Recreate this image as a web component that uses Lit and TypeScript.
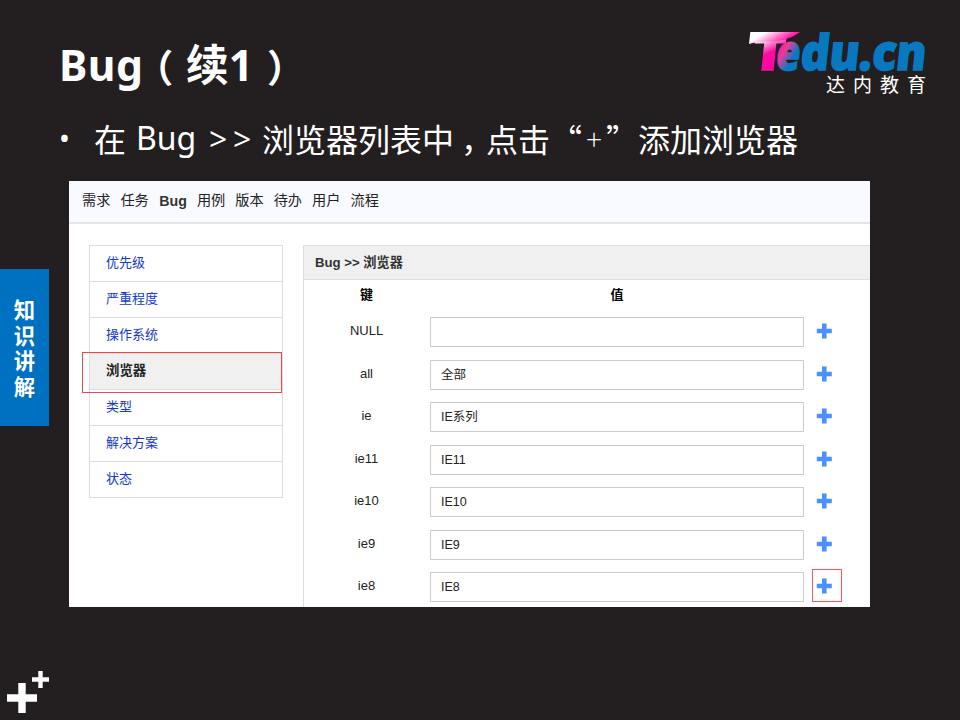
import { LitElement, html, css, svg } from "lit";
import { customElement } from "lit/decorators.js";
import { classMap } from "lit/directives/class-map.js";

const NAV = ["需求", "任务", "Bug", "用例", "版本", "待办", "用户", "流程"];
const MENU = ["优先级", "严重程度", "操作系统", "浏览器", "类型", "解决方案", "状态"];
const ROWS = [
  ["NULL", ""],
  ["all", "全部"],
  ["ie", "IE系列"],
  ["ie11", "IE11"],
  ["ie10", "IE10"],
  ["ie9", "IE9"],
  ["ie8", "IE8"],
];

@customElement("brand-logo")
class BrandLogo extends LitElement {
  static styles = css`
    :host { display: block; width: 190px; height: 92px; }
    svg { display: block; overflow: visible; }
    .word { font: 800 49px "Open Sans", "Noto Sans", sans-serif; stroke-width: 1.6px; }
    .sub { font: 400 19px "Noto Sans CJK SC", sans-serif; letter-spacing: 8px; }
  `;
  render() {
    return html`<svg width="190" height="92" viewBox="0 -20 190 92">
      ${svg`
      <defs>
        <linearGradient id="t" gradientUnits="userSpaceOnUse" x1="14" y1="4" x2="29" y2="29">
          <stop offset="0.1" stop-color="#fff"/><stop offset="0.72" stop-color="#ff0aa0"/><stop offset="1" stop-color="#ff0aa0"/>
        </linearGradient>
        <linearGradient id="t2" gradientUnits="userSpaceOnUse" x1="-10" y1="-38" x2="2" y2="-13">
          <stop offset="0.1" stop-color="#fff"/><stop offset="0.72" stop-color="#ff0aa0"/><stop offset="1" stop-color="#ff0aa0"/>
        </linearGradient>
        <linearGradient id="e" gradientUnits="userSpaceOnUse" x1="0" y1="-20" x2="20" y2="-10">
          <stop offset="0" stop-color="#ff1a98"/><stop offset="0.3" stop-color="#e83c9c"/><stop offset="0.8" stop-color="#0a78c2"/><stop offset="1" stop-color="#0a78c2"/>
        </linearGradient>
      </defs>
      <g transform="translate(30 41.500) skewX(-6)">
        <text class="word" x="-1" y="0" fill="url(#e)" stroke="url(#e)" textLength="24" lengthAdjust="spacingAndGlyphs">e</text>
        <text class="word" x="23.500" y="0" fill="#0878c0" stroke="#0878c0" textLength="125.500" lengthAdjust="spacingAndGlyphs">du.cn</text>
        <text class="word" x="-24.500" y="0" fill="url(#t2)" stroke="url(#t2)" textLength="32" lengthAdjust="spacingAndGlyphs">T</text>
      </g>
      <path d="M4.300 4H54C48 9 40 11.500 30.500 13.300C20 13.500 8 14 3 16Z" fill="url(#t)"/>
      <text class="sub" x="80" y="64" fill="#fff">达内教育</text>`}
    </svg>`;
  }
}

@customElement("app-root")
class AppRoot extends LitElement {
  static styles = css`
    :host {
      display: block; width: 960px; height: 720px; overflow: hidden; position: relative;
      background: #231f20; color: #fff;
      font-family: "Noto Sans", "Noto Sans CJK SC", sans-serif;
    }
    *, *::after { box-sizing: border-box; }
    .head { display: flex; justify-content: space-between; height: 108px; padding: 8px 24px 0 60px; }
    h1 { margin: 23px 0 0; font-size: 42.67px; line-height: 64px; font-weight: 700; white-space: nowrap; height: 64px; }
    .latin { letter-spacing: 0.4px; margin-left: -1px; }
    .cjk { font-family: "Noto Sans CJK SC", sans-serif; }
    .open, .close { font-size: 38px; line-height: 1; vertical-align: -1px; }
    .open { margin: 0 12.7px 0 -8px; }
    .close { margin-left: 14px; }
    .lead { display: flex; height: 58px; padding-left: 59px; font-size: 32px; line-height: 60px; white-space: pre; }
    .dot { width: 35px; font-size: 29px; }
    .bug { width: 83px; padding-left: 10px; line-height: 59px; }
    .gt { width: 53px; font-family: "Open Sans", sans-serif; letter-spacing: 5.7px; line-height: 61px; }
    .comma { position: relative; left: 7px; }
    .plus { width: 24px; text-align: center; font-size: 29px; font-weight: 300; font-family: "Open Sans", sans-serif; line-height: 62px; }
    .shot {
      margin: 15px 0 0 69px; width: 801px; height: 426px; background: #fff; color: #222;
      overflow: hidden; font: 13px "Liberation Sans", "Noto Sans CJK SC", sans-serif;
    }
    .nav {
      display: flex; gap: 10px; height: 43px; padding-left: 13px; line-height: 39px;
      font-size: 14.2px; background: #f9faff; border-bottom: 2px solid #e4e5e8;
    }
    .nav .on { font-weight: 700; color: #333; padding-left: 0.5px; line-height: 41px; }
    .body { display: flex; gap: 20px; padding: 21px 0 0 20px; }
    .menu { width: 194px; height: 253px; border: 1px solid #ddd; border-bottom: 0; }
    .item { height: 36px; border-bottom: 1px solid #ddd; padding-left: 16px; line-height: 34px; color: #1238cc; position: relative; }
    .item.on { background: #f0f0f0; color: #222; font-weight: 700; font-size: 13.4px; }
    .item.on::after { content: ""; position: absolute; left: -8px; top: -2px; width: 200px; height: 41px; border: 1px solid #f04848; z-index: 1; }
    .panel { width: 567px; height: 380px; border: 1px solid #ddd; border-right: 0; }
    .title { height: 34px; padding-left: 11px; line-height: 33px; font-size: 13.2px; background: #f0f0f0; border-bottom: 1px solid #ddd; font-weight: 700; color: #333; }
    .cols, .row { display: grid; grid-template-columns: 126px 374px 40px; }
    .cols { height: 37px; line-height: 29px; font-weight: 700; text-align: center; color: #000; }
    .row { height: 42.5px; align-items: start; line-height: 28px; }
    .key { text-align: center; padding-right: 1px; }
    .field { height: 30px; border: 1px solid #ccc; padding-left: 10px; font-size: 12.5px; line-height: 28px; }
    .add { position: relative; height: 30px; padding: 6px 0 0 12px; }
    .add svg { display: block; }
    .add.hot::after { content: ""; position: absolute; left: 8px; top: -3px; width: 30px; height: 33px; border: 1px solid #f55; }
    .tab {
      position: absolute; left: 0; top: 269px; width: 49px; height: 157px; background: #0070c0;
      display: flex; flex-direction: column; align-items: center; padding-top: 27px;
      font: 700 21.33px/25.5px "Noto Sans CJK SC", sans-serif;
    }
    .mark { position: absolute; left: 6px; top: 670px; }
  `;
  render() {
    return html`
      <div class="head">
        <h1><span class="latin">Bug</span><span class="cjk open">（</span><span class="cjk">续</span>1<span class="cjk close">）</span></h1>
        <brand-logo></brand-logo>
      </div>
      <div class="lead"><span class="dot">•</span><span class="cjk">在</span><span class="bug">Bug</span><span class="gt">&gt;&gt;</span><span class="cjk">浏览器列表中<span class="comma">，</span>点击“</span><span class="plus">+</span><span class="cjk">”添加浏览器</span></div>
      <div class="shot">
        <div class="nav">${NAV.map((n) => html`<span class=${classMap({ on: n === "Bug" })}>${n}</span>`)}</div>
        <div class="body">
          <div class="menu">${MENU.map((m) => html`<div class=${classMap({ item: true, on: m === "浏览器" })}>${m}</div>`)}</div>
          <div class="panel">
            <div class="title">Bug &gt;&gt; 浏览器</div>
            <div class="cols"><span class="key">键</span><span>值</span></div>
            ${ROWS.map(([k, v], i) => html`<div class="row">
              <span class="key">${k}</span>
              <div class="field">${v}</div>
              <div class=${classMap({ add: true, hot: i === ROWS.length - 1 })}>
                <svg width="16" height="16" viewBox="0 0 16 16"><path d="M6 .5h4.600v5.200h5.200v4.600h-5.200v5.200H6v-5.200H.8V5.700H6z" fill="#4a90ff"/></svg>
              </div>
            </div>`)}
          </div>
        </div>
      </div>
      <div class="tab">${[..."知识讲解"].map((c) => html`<span>${c}</span>`)}</div>
      <svg class="mark" width="44" height="46" viewBox="0 0 44 46">
        <path d="M12.3 13h7.4v11.3H31v7.4H19.700V43h-7.400V31.700H1v-7.400h11.300z M32.300 1h4.400v6.300H43v4.400h-6.300V18h-4.400v-6.300H26V7.300h6.300z" fill="#fff"/>
      </svg>
    `;
  }
}
